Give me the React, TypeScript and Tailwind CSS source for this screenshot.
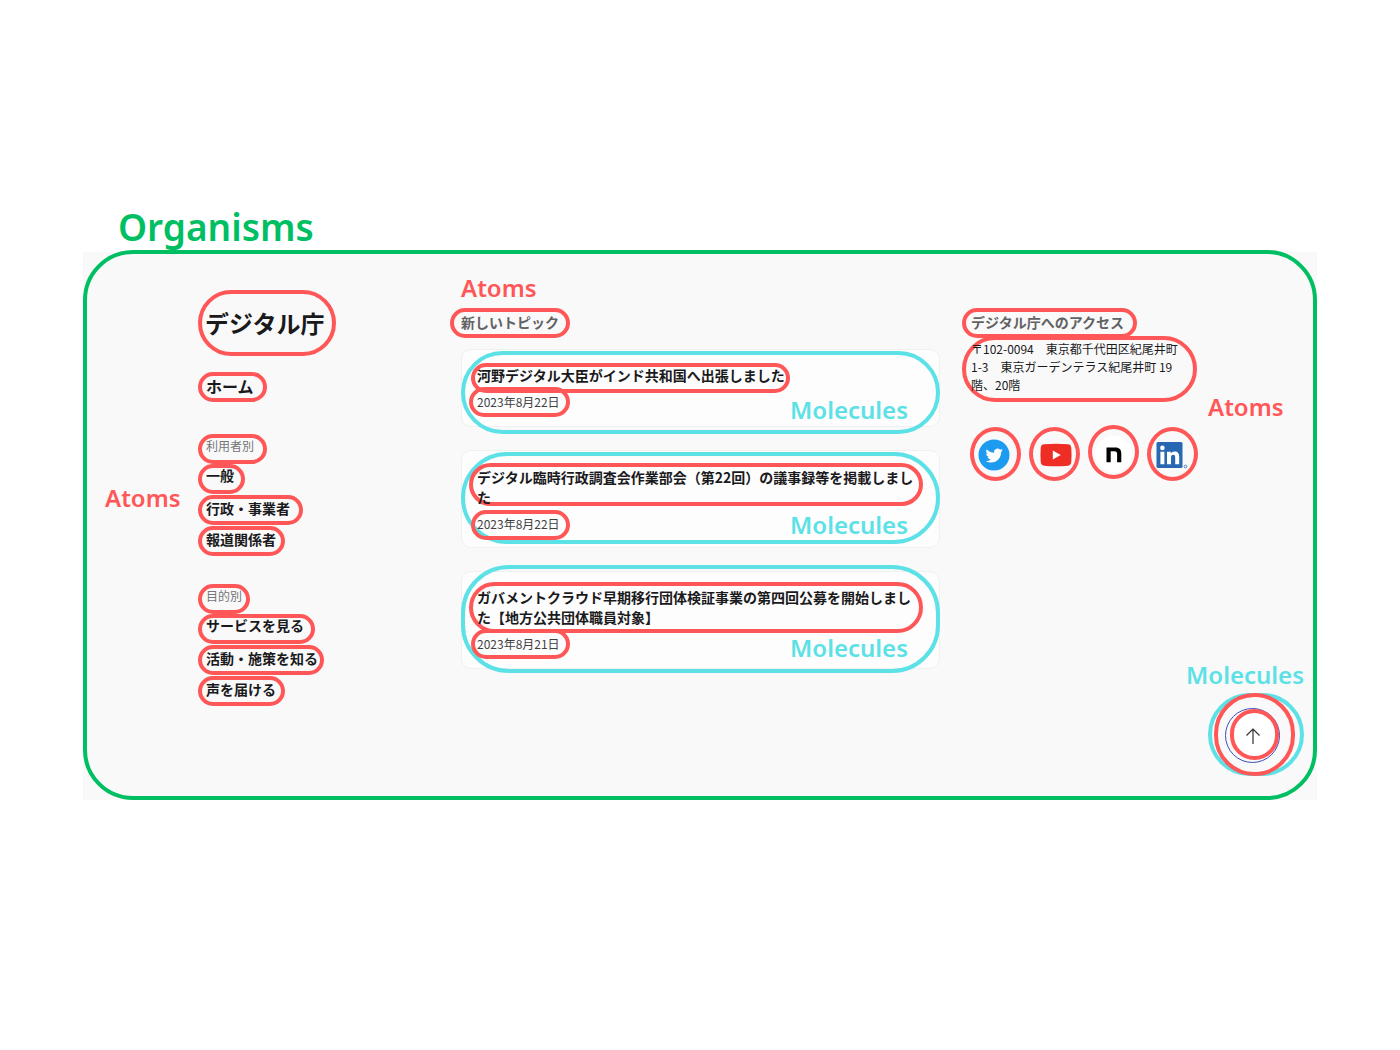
import React from "react";

const atom = "border-4 border-[#ff5757] rounded-full";
const pill = `${atom} h-[30px] w-fit`;

function Label({ children, className }: { children: React.ReactNode; className: string }) {
  return (
    <p className={`font-['Noto_Sans',sans-serif] text-2xl leading-7 font-semibold whitespace-nowrap ${className}`}>
      {children}
    </p>
  );
}

const groups = [
  {
    title: "利用者別",
    titlePad: "pr-[9px]",
    items: [
      { text: "一般", pad: "pr-[7px] leading-[14px]" },
      { text: "行政・事業者", pad: "pr-[9px] leading-[18px]" },
      { text: "報道関係者", pad: "pr-[5px] leading-[18px]" },
    ],
  },
  {
    title: "目的別",
    titlePad: "pr-1",
    items: [
      { text: "サービスを見る", pad: "pr-[7px] leading-[14px]" },
      { text: "活動・施策を知る", pad: "pr-0.5 leading-[18px]" },
      { text: "声を届ける", pad: "pr-[5px] leading-[18px]" },
    ],
  },
];

const topics = [
  {
    title: "河野デジタル大臣がインド共和国へ出張しました",
    date: "2023年8月22日",
    card: "pt-[13px] pb-0.5",
    titleBox: "ml-0.5 h-[30px] w-[319px] pl-0.5 leading-4 whitespace-nowrap",
    row: "-mt-1.5",
    dateBox: "pt-px pr-1.5 pl-1",
    ring: "top-px h-[83px] rounded-full",
    label: "mt-[9px]",
  },
  {
    title: "デジタル臨時行政調査会作業部会（第22回）の議事録等を掲載しました",
    date: "2023年8月22日",
    card: "pt-3 pb-[7px]",
    titleBox: "h-[43px] pl-1 leading-5",
    row: "mt-1",
    dateBox: "ml-0.5 pr-1.5 pl-0.5",
    ring: "top-px h-[92px] rounded-full",
    label: "mt-px",
  },
  {
    title: "ガバメントクラウド早期移行団体検証事業の第四回公募を開始しました【地方公共団体職員対象】",
    date: "2023年8月21日",
    card: "pt-2.5 pb-1.5",
    titleBox: "h-[51px] pt-px pl-1 leading-5",
    row: "-mt-1",
    dateBox: "ml-0.5 pt-px pr-1.5 pl-0.5",
    ring: "-top-[7px] h-[108px] rounded-[48px]",
    label: "mt-[5px]",
  },
];

function TwitterIcon() {
  return (
    <svg viewBox="0 0 32 32" className="size-8 shrink-0">
      <circle cx="16" cy="16" r="15.5" fill="#1d9bf0" />
      <path
        transform="translate(7.6 7.9) scale(0.72)"
        fill="#fff"
        d="M23.95 4.57a10 10 0 0 1-2.82.77 4.96 4.96 0 0 0 2.16-2.72c-.95.55-2 .95-3.13 1.18a4.92 4.92 0 0 0-8.38 4.48C7.69 8.09 4.07 6.13 1.64 3.16a4.92 4.92 0 0 0 1.52 6.57 4.9 4.9 0 0 1-2.23-.61v.06a4.92 4.92 0 0 0 3.95 4.83 5 5 0 0 1-2.21.08 4.94 4.94 0 0 0 4.6 3.42A9.87 9.87 0 0 1 0 19.54a13.94 13.94 0 0 0 7.55 2.21c9.05 0 14-7.5 14-13.98 0-.21 0-.42-.02-.63a9.94 9.94 0 0 0 2.46-2.55z"
      />
    </svg>
  );
}

function YoutubeIcon() {
  return (
    <svg viewBox="0 0 32 32" className="size-8 shrink-0">
      <path
        fill="#ee2d24"
        d="M4 5.3Q16 4.3 28 5.3Q31 5.6 31.3 9Q31.8 16 31.3 23Q31 26.4 28 26.7Q16 27.7 4 26.7Q1 26.4 .7 23Q.2 16 .7 9Q1 5.6 4 5.3Z"
      />
      <path fill="#fff" d="M12.8 11.5v9l8-4.5z" />
    </svg>
  );
}

function NoteIcon() {
  return (
    <svg viewBox="0 0 42 42" className="size-[42px] shrink-0">
      <circle cx="20.5" cy="20" r="18.5" fill="#fff" />
      <path fill="#000" d="M13.5 13.5h8.8c4.2 0 6 2.2 6 6v8.8h-4.2v-8.4c0-1.8-.8-2.6-2.5-2.6h-3.9v11h-4.2z" />
    </svg>
  );
}

function LinkedinIcon() {
  return (
    <svg viewBox="0 0 32 28" className="h-7 w-8 shrink-0">
      <rect x="0.5" y="1" width="26" height="26" rx="1.5" fill="#2867b2" />
      <circle cx="6.4" cy="6.9" r="2.3" fill="#fff" />
      <path
        fill="#fff"
        d="M4.4 10.8h4v12.4h-4zM11 10.8h3.8v1.7c.7-1.3 2-2 3.8-2 3.3 0 4.6 2 4.6 5.4v7.3h-4v-6.6c0-1.8-.5-2.8-1.9-2.8-1.6 0-2.3 1.1-2.3 2.9v6.5h-4z"
      />
      <circle cx="29.5" cy="25.5" r="1.4" fill="none" stroke="#2867b2" strokeWidth="0.8" />
    </svg>
  );
}

const socials = [
  { name: "Twitter", icon: <TwitterIcon />, box: "mt-0.5 pt-2 pl-1" },
  { name: "YouTube", icon: <YoutubeIcon />, box: "mt-0.5 pt-2 pl-[7px]" },
  { name: "note", icon: <NoteIcon />, box: "pt-[5px] pl-px" },
  { name: "LinkedIn", icon: <LinkedinIcon />, box: "mt-0.5 pt-2.5 pl-[5px]" },
];

export default function App() {
  return (
    <div
      lang="ja"
      className="min-h-screen bg-white px-[83px] pt-[200px] pb-20 font-['Noto_Sans_CJK_JP',sans-serif] text-[#1a1a1c]"
    >
      <h1 className="flex h-[52px] items-center pl-[35px] font-['Noto_Sans',sans-serif] text-[37px] leading-none font-semibold text-[#00bf63]">
        Organisms
      </h1>

      <div className="flow-root bg-[#f9f9f9]">
        <section className="-mt-0.5 flex rounded-[50px] border-4 border-[#00bf63]">
          <div className="w-[111px] shrink-0 pt-[230px] pl-[18px]">
            <Label className="text-[#ff5757]">Atoms</Label>
          </div>

          <nav className="flex w-[252px] shrink-0 flex-col items-start pt-9 pb-[90px]">
            <a href="#top" className={`${atom} flex h-[66px] items-center pr-[7px] pl-[3px] text-2xl leading-9 font-bold`}>
              デジタル庁
            </a>
            <a href="#home" className={`${pill} mt-4 pr-[9px] pl-1 text-base leading-5 font-bold`}>
              ホーム
            </a>
            <div className="mt-8 flex flex-col gap-7">
              {groups.map((g) => (
                <div key={g.title}>
                  <h2 className={`${pill} pl-1 text-xs leading-4 text-[#757578] ${g.titlePad}`}>{g.title}</h2>
                  <ul className="flex flex-col gap-px text-sm font-bold">
                    {g.items.map((i) => (
                      <li key={i.text}>
                        <a href="#link" className={`${pill} block pl-1 ${i.pad}`}>
                          {i.text}
                        </a>
                      </li>
                    ))}
                  </ul>
                </div>
              ))}
            </div>
          </nav>

          <div className="min-w-0 flex-1 pt-5">
            <Label className="pl-[11px] text-[#ff5757]">Atoms</Label>
            <h2 className={`${pill} mt-1.5 px-[7px] text-sm leading-5 font-bold text-[#626264]`}>
              新しいトピック
            </h2>
            <div className="mt-[11px] flex flex-col gap-[23px] pl-[11px]">
              {topics.map((t) => (
                <article
                  key={t.title}
                  className={`relative rounded-[10px] border border-[#f0f0f0] bg-[#fdfdfd] pr-4 pl-[7px] ${t.card}`}
                >
                  <span
                    aria-hidden="true"
                    className={`pointer-events-none absolute -inset-x-px border-4 border-[#5ce1e6] ${t.ring}`}
                  />
                  <h3 className={`${atom} relative text-sm font-bold ${t.titleBox}`}>
                    <a href="#topic">{t.title}</a>
                  </h3>
                  <div className={`relative flex items-start justify-between pr-[15px] ${t.row}`}>
                    <p className={`${pill} text-xs leading-5 text-[#414143] ${t.dateBox}`}>
                      <time>{t.date}</time>
                    </p>
                    <Label className={`text-[#5ce1e6] ${t.label}`}>Molecules</Label>
                  </div>
                </article>
              ))}
            </div>
          </div>

          <div className="ml-[22px] flex w-[351px] shrink-0 flex-col pt-[54px] pr-[9px] pb-5">
            <h2 className={`${pill} pr-[9px] pl-[5px] text-sm leading-5 font-bold text-[#626264]`}>
              デジタル庁へのアクセス
            </h2>
            <div className="-mt-0.5 flex gap-[11px]">
              <address className={`${atom} h-[66px] w-[235px] pr-1 pl-[5px] text-xs leading-[18px] not-italic`}>
                〒102-0094　東京都千代田区紀尾井町 1-3　東京ガーデンテラス紀尾井町 19階、20階
              </address>
              <Label className="mt-[57px] text-[#ff5757]">Atoms</Label>
            </div>
            <ul className="mt-1 flex gap-2 pl-2">
              {socials.map((s) => (
                <li key={s.name}>
                  <a
                    href="#social"
                    aria-label={s.name}
                    className={`flex h-[54px] w-[51px] items-start rounded-[50%] border-4 border-[#ff5757] ${s.box}`}
                  >
                    {s.icon}
                  </a>
                </li>
              ))}
            </ul>

            <div className="mt-auto flex flex-col items-end gap-1">
              <Label className="text-[#5ce1e6]">Molecules</Label>
              <button type="button" aria-label="ページの先頭へ戻る" className="grid place-items-center">
                <span className="h-[83px] w-24 rounded-full border-4 border-[#5ce1e6] [grid-area:1/1]" />
                <span className="mt-0.5 mr-2 size-[55px] rounded-full border border-[#3b4fc0] [grid-area:1/1]" />
                <span className={`${atom} mr-[3px] h-[83px] w-[81px] [grid-area:1/1]`} />
                <span className={`${atom} mr-[3px] grid h-[51px] w-[49px] place-items-center bg-white [grid-area:1/1]`}>
                  <svg viewBox="0 0 16 18" className="mt-0.5 mr-1 h-[18px] w-4" fill="none" stroke="#333" strokeWidth="1.2">
                    <path d="M8 17V2M1.5 8.5 8 2l6.5 6.5" />
                  </svg>
                </span>
              </button>
            </div>
          </div>
        </section>
      </div>
    </div>
  );
}
